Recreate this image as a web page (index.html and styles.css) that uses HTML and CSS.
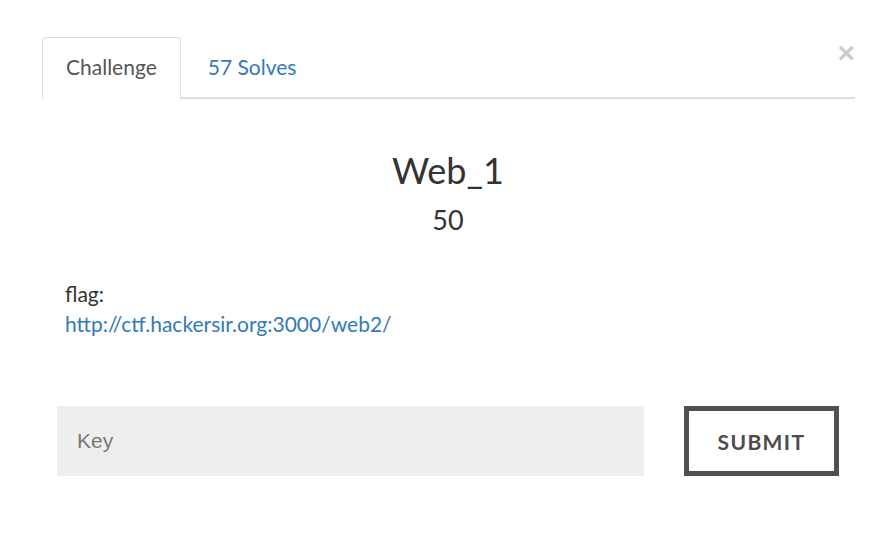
FILE: index.html
```html
<!DOCTYPE html>
<html>
<head>
<meta charset="utf-8">
<link rel="stylesheet" href="styles.css">
</head>
<body>
<div class="modal">
  <button class="close" type="button">&times;</button>
  <ul class="tabs">
    <li class="tab active"><a href="#">Challenge</a></li>
    <li class="tab"><a href="#">57 Solves</a></li>
  </ul>
  <div class="content">
    <h2 class="title">Web_1</h2>
    <h3 class="value">50</h3>
    <div class="desc">
      <p>flag:<br><a href="#">http://ctf.hackersir.org:3000/web2/</a></p>
    </div>
    <form class="form">
      <input class="key" type="text" placeholder="Key">
      <button class="submit" type="button">Submit</button>
    </form>
  </div>
</div>
</body>
</html>
```
FILE: styles.css
```css
html, body {
  margin: 0;
  padding: 0;
  background: #fff;
}
body {
  font-family: Lato, "Open Sans", sans-serif;
  color: #333;
}
.modal {
  position: relative;
  padding: 37px 35px 0 42px;
}
.close {
  position: absolute;
  top: 38px;
  right: 35px;
  border: 0;
  background: none;
  padding: 0;
  font-family: "Liberation Sans", Arial, sans-serif;
  font-size: 30px;
  line-height: 30px;
  font-weight: bold;
  color: #ccc;
}
.tabs {
  list-style: none;
  margin: 0;
  padding: 0;
  display: flex;
  border-bottom: 2px solid #ddd;
}
.tab {
  margin-bottom: -2px;
  margin-right: 3px;
}
.tab a {
  display: block;
  padding: 17px 23px 18px 23px;
  font-size: 21px;
  line-height: 24px;
  color: #337ab7;
  text-decoration: none;
  border: 1px solid transparent;
  border-bottom: 0;
  border-radius: 4px 4px 0 0;
  height: 24px;
}
.tab.active a {
  color: #555;
  background: #fff;
  border-color: #ddd;
  padding-bottom: 20px;
}
.content {
  padding: 0 16px 0 15px;
}
.title {
  margin: 50px 0 0;
  text-align: center;
  font-size: 36px;
  line-height: 43px;
  font-weight: 400;
}
.value {
  margin: 12px 0 0;
  text-align: center;
  font-size: 27px;
  line-height: 32px;
  font-weight: 400;
}
.desc {
  margin-top: 43px;
  padding-left: 8px;
  font-size: 21px;
  line-height: 30px;
}
.desc p {
  margin: 0;
}
.desc a {
  color: #337ab7;
  text-decoration: none;
}
.form {
  display: flex;
  gap: 40px;
  margin-top: 67px;
}
.key {
  flex: 1;
  height: 70px;
  box-sizing: border-box;
  border: 0;
  background: #eee;
  padding: 0 20px;
  font-family: "Liberation Sans", Arial, sans-serif;
  font-size: 21px;
  color: #333;
  outline: none;
}
.key::placeholder {
  color: #777;
}
.submit {
  width: 155px;
  height: 70px;
  box-sizing: border-box;
  border: 5px solid #505050;
  background: #fff;
  font-family: Lato, sans-serif;
  font-weight: 700;
  font-size: 21px;
  letter-spacing: 1.4px;
  text-transform: uppercase;
  color: #4d4d4d;
}
```
